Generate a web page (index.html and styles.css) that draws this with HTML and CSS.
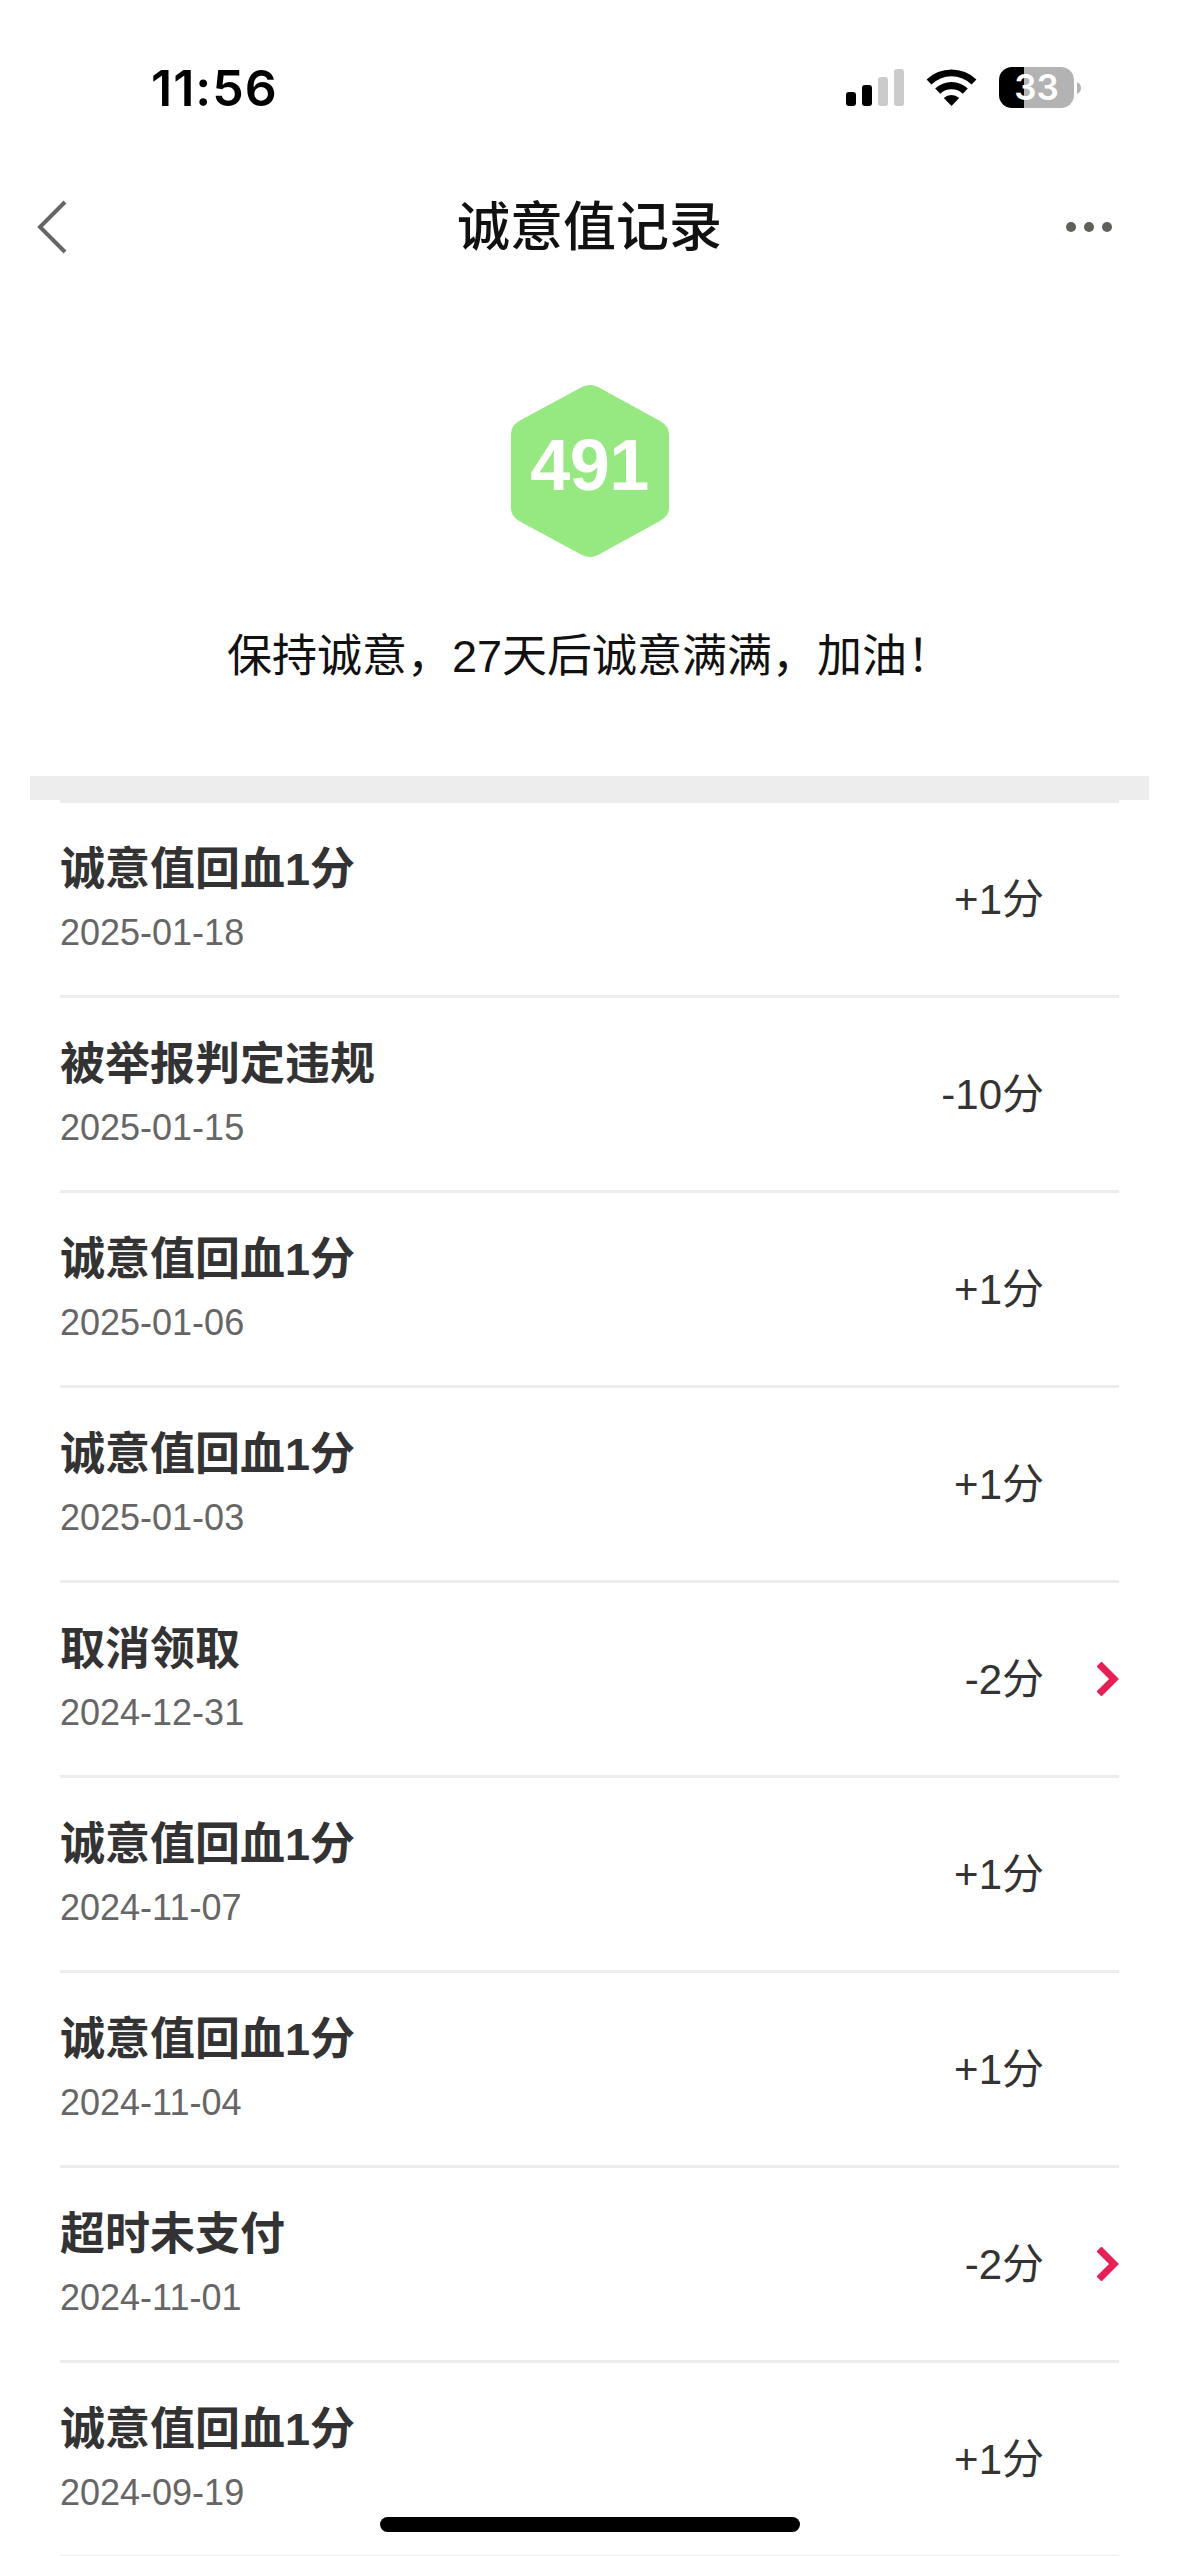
FILE: index.html
```html
<!DOCTYPE html>
<html lang="zh-CN">
<head>
    <meta charset="UTF-8">
    <title>诚意值记录</title>
    <link rel="stylesheet" href="styles.css">
</head>
<body>
    <div class="status-bar">
        <div class="time">11:56</div>
        <div class="status-icons">
            <svg class="signal" width="58" height="37" viewBox="0 0 58 37">
                <rect x="0" y="23" width="10" height="14" rx="3"/>
                <rect x="16" y="16" width="10" height="21" rx="3"/>
                <rect x="32" y="8" width="10" height="29" rx="3" fill="#cbcbcb"/>
                <rect x="48" y="0" width="10" height="37" rx="3" fill="#cbcbcb"/>
            </svg>
            <svg class="wifi" width="51" height="37" viewBox="0 0 51 37">
                <path d="M0.6 10.4 A36 36 0 0 1 50.4 10.4 L45.6 15.4 A29 29 0 0 0 5.4 15.4 Z"/>
                <path d="M9.2 19.6 A23.5 23.5 0 0 1 41.8 19.6 L36.8 24.8 A16.6 16.6 0 0 0 14.2 24.8 Z"/>
                <path d="M17.8 29 A11.5 11.5 0 0 1 33.2 29 L25.5 37 Z"/>
            </svg>
            <div class="battery">
                <span class="battery-level">33</span>
            </div>
            <svg class="battery-tip" width="4" height="12" viewBox="0 0 4 12">
                <path d="M0 0 Q4 2 4 6 Q4 10 0 12 Z" fill="#b3b3b3"/>
            </svg>
        </div>
    </div>

    <div class="nav-bar">
        <svg class="back" width="32" height="56" viewBox="0 0 32 56">
            <path d="M29 3 L4 28 L29 53" fill="none" stroke="#666" stroke-width="4"/>
        </svg>
        <h1>诚意值记录</h1>
        <div class="more"><i></i><i></i><i></i></div>
    </div>

    <div class="summary">
        <div class="badge">
            <svg width="160" height="174" viewBox="0 0 160 174">
                <path d="M72 3 Q80 -1 88 3 L150 37 Q159 42 159 50 L159 124 Q159 132 150 137 L88 171 Q80 175 72 171 L9 137 Q1 132 1 124 L1 50 Q1 42 9 37 Z" fill="#96e981"/>
            </svg>
            <span class="score">491</span>
        </div>
        <p>保持诚意，27天后诚意满满，加油！</p>
    </div>

    <div class="divider"></div>

    <ul class="records">
        <li>
            <div class="info"><b>诚意值回血1分</b><span>2025-01-18</span></div>
            <div class="points">+1分</div>
        </li>
        <li>
            <div class="info"><b>被举报判定违规</b><span>2025-01-15</span></div>
            <div class="points">-10分</div>
        </li>
        <li>
            <div class="info"><b>诚意值回血1分</b><span>2025-01-06</span></div>
            <div class="points">+1分</div>
        </li>
        <li>
            <div class="info"><b>诚意值回血1分</b><span>2025-01-03</span></div>
            <div class="points">+1分</div>
        </li>
        <li>
            <div class="info"><b>取消领取</b><span>2024-12-31</span></div>
            <div class="points">-2分</div>
            <svg class="arrow" width="22" height="34" viewBox="0 0 22 34"><path d="M2 2 L17 17 L2 32"/></svg>
        </li>
        <li>
            <div class="info"><b>诚意值回血1分</b><span>2024-11-07</span></div>
            <div class="points">+1分</div>
        </li>
        <li>
            <div class="info"><b>诚意值回血1分</b><span>2024-11-04</span></div>
            <div class="points">+1分</div>
        </li>
        <li>
            <div class="info"><b>超时未支付</b><span>2024-11-01</span></div>
            <div class="points">-2分</div>
            <svg class="arrow" width="22" height="34" viewBox="0 0 22 34"><path d="M2 2 L17 17 L2 32"/></svg>
        </li>
        <li>
            <div class="info"><b>诚意值回血1分</b><span>2024-09-19</span></div>
            <div class="points">+1分</div>
        </li>
    </ul>

    <div class="home-indicator"></div>
</body>
</html>
```

FILE: styles.css
```css
* {
    box-sizing: border-box;
}

body {
    margin: 0;
    height: 2556px;
    overflow: hidden;
    position: relative;
    background-color: #fff;
    color: #111;
    font-family: "Liberation Sans", "Noto Sans CJK SC", sans-serif;
}

/* status bar */
.status-bar {
    display: flex;
    justify-content: space-between;
    height: 147px;
    padding: 67px 98px 0 151px;
    color: #000;
}

.time {
    height: 41px;
    line-height: 42px;
    font-family: Inter, sans-serif;
    font-size: 50px;
    font-weight: 600;
    letter-spacing: 1px;
}

.status-icons {
    display: flex;
    align-items: center;
    height: 41px;
}

.wifi {
    margin: 0 22px;
}

.battery {
    width: 75px;
    height: 41px;
    border-radius: 13px;
    background: linear-gradient(to right, #000 25px, #b3b3b3 25px);
    text-align: center;
}

.battery-level {
    color: #fff;
    font-family: Inter, sans-serif;
    font-size: 35px;
    font-weight: 600;
    line-height: 41px;
}

.battery-tip {
    margin-left: 3px;
}

/* nav */
.nav-bar {
    display: flex;
    align-items: center;
    justify-content: space-between;
    height: 160px;
    padding: 0 67px 0 36px;
}

.back {
    margin-right: 45px;
}

h1 {
    margin: 0;
    padding-top: 2px;
    font-size: 53px;
    font-weight: 500;
    line-height: 72px;
}

.more {
    display: flex;
    gap: 8px;
    width: 46px;
}

.more i {
    width: 10px;
    height: 10px;
    border-radius: 50%;
    background-color: #5f5f5b;
}

/* score */
.summary {
    display: flex;
    flex-direction: column;
    align-items: center;
    height: 469px;
    padding-top: 77px;
}

.badge {
    position: relative;
    width: 160px;
    height: 174px;
}

.score {
    position: absolute;
    top: 41px;
    left: 0;
    width: 100%;
    color: #fff;
    font-size: 72px;
    font-weight: bold;
    letter-spacing: -0.5px;
    line-height: 80px;
    text-align: center;
}

.summary p {
    margin: 67px 0 0;
    font-size: 45px;
    line-height: 64px;
}

.divider {
    height: 24px;
    margin: 0 30px;
    background-color: #ededed;
}

/* record list */
.records {
    list-style: none;
    margin: 0 60px;
    padding: 0;
    color: #333;
}

.records li {
    display: flex;
    align-items: center;
    height: 195px;
    border-top: 3px solid #ededed;
}

.records li:last-child {
    height: 196px;
    border-bottom: 1px solid #ededed;
}

.info {
    display: flex;
    flex-direction: column;
    flex: 1;
    padding-top: 3px;
}

.info b {
    font-size: 45px;
    line-height: 64px;
}

.info span {
    color: #666;
    font-size: 36px;
    line-height: 61px;
}

.points {
    padding-top: 2px;
    margin-right: 75px;
    font-size: 42px;
    line-height: 60px;
}

.arrow {
    margin-left: -22px;
    fill: none;
    stroke: #e91e55;
    stroke-width: 7;
}

.home-indicator {
    position: absolute;
    left: 380px;
    bottom: 24px;
    width: 420px;
    height: 15px;
    border-radius: 8px;
    background-color: #000;
}
```
